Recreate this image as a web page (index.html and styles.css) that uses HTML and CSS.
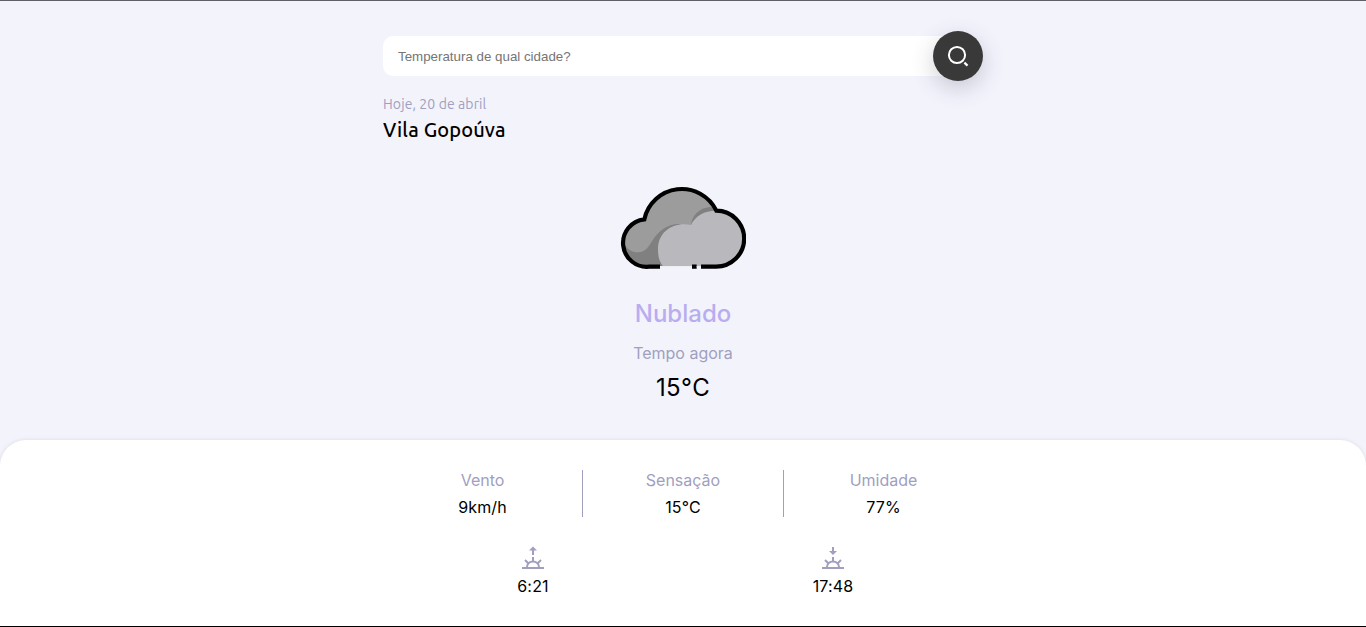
FILE: index.html
```html
<!DOCTYPE html>
<html lang="pt-BR">
<head>
<meta charset="utf-8">
<title>Previsão do tempo</title>
<link rel="stylesheet" href="styles.css">
</head>
<body>
<main class="top">
  <form class="search">
    <input class="search-input" type="text" placeholder="Temperatura de qual cidade?">
    <button class="search-button" type="button" aria-label="Buscar">
      <svg width="24" height="24" viewBox="0 0 24 24" fill="none" stroke="#fff" stroke-width="2"><circle cx="11" cy="11" r="8.1"/><path d="M18.4 18.6L21.5 21.6" stroke-width="2.2"/></svg>
    </button>
  </form>
  <p class="date">Hoje, 20 de abril</p>
  <h1 class="city">Vila Gopoúva</h1>
  <section class="now">
    <svg class="cloud" width="126" height="84" viewBox="30 33 378 252">
      <path fill="#9c9c9d" d="M118 275A71 71 0 0 1 103 133A115 115 0 0 1 319 107A84 84 0 0 1 318 275Z"/>
      <path fill="#808081" d="M42 204C51 223 65 232 84 232C108 231 116 213 127 197C145 169 172 147 207 147L245 160V275H110C70 275 39 242 42 204Z"/>
      <path fill="#808081" d="M243 150C246 117 274 95 309 96L325 115L260 150Z"/>
      <path fill="#b9b8bc" d="M160 275C146 258 144 240 144 222C144 169 192 139 243 150C256 122 283 107 318 107A84 84 0 0 1 318 275Z"/>
      <path fill="none" stroke="#000" stroke-width="12.5" d="M150 275H118A71 71 0 0 1 103 133A115 115 0 0 1 319 107A84 84 0 0 1 318 275H273M260 275H246"/>
      <path stroke="#eeedf2" stroke-width="4" d="M150 275H246M260 275H273"/>
    </svg>
    <h2 class="condition">Nublado</h2>
    <p class="label">Tempo agora</p>
    <p class="temperature">15°C</p>
  </section>
</main>
<footer class="details">
  <div class="stats">
    <div class="stat"><p class="label">Vento</p><p class="value">9km/h</p></div>
    <div class="stat divided"><p class="label">Sensação</p><p class="value">15°C</p></div>
    <div class="stat"><p class="label">Umidade</p><p class="value">77%</p></div>
  </div>
  <div class="sun-times">
    <div class="sun">
      <svg width="24" height="24" viewBox="0 0 24 24" fill="none" stroke="#a09fbf" stroke-width="2"><path d="M1 22H23M6 21a6 5.5 0 0 1 12 0M12 16v-5M7.5 17.5L4 14M16.5 17.5L20 14M12 9V3"/><path d="M8 4.5L12 .5L16 4.5Z" fill="#a09fbf" stroke="none"/></svg>
      <p class="value">6:21</p>
    </div>
    <div class="sun">
      <svg width="24" height="24" viewBox="0 0 24 24" fill="none" stroke="#a09fbf" stroke-width="2"><path d="M1 22H23M6 21a6 5.5 0 0 1 12 0M12 16v-5M7.5 17.5L4 14M16.5 17.5L20 14M12 1V6"/><path d="M8 5L12 9L16 5Z" fill="#a09fbf" stroke="none"/></svg>
      <p class="value">17:48</p>
    </div>
  </div>
</footer>
</body>
</html>
```
FILE: styles.css
```css
* { box-sizing: border-box; margin: 0; padding: 0; }
body {
  height: 627px;
  display: flex;
  flex-direction: column;
  overflow: hidden;
  background: #f3f3fc;
  border-top: 1px solid #5f5f65;
  border-bottom: 1px solid #000;
  font-family: Inter, sans-serif;
  font-size: 16px;
  color: #000;
}
.top { width: 600px; height: 439px; margin: 0 auto; padding-top: 30px; }
.search { display: flex; align-items: center; height: 50px; }
.search-input {
  width: 575px;
  height: 40px;
  padding: 0 15px;
  border: 0;
  border-radius: 10px;
  background: #fff;
  font: 13.333px "Liberation Sans", Arial, sans-serif;
}
.search-input::placeholder { color: #757575; }
.search-button {
  display: flex;
  align-items: center;
  justify-content: center;
  width: 50px;
  height: 50px;
  margin-left: -25px;
  border: 0;
  border-radius: 50%;
  background: #393939;
  box-shadow: 0 7px 22px rgba(57, 57, 80, .23);
}
.date {
  margin-top: 13px;
  font: 14px/20px Ubuntu, "Noto Sans", sans-serif;
  letter-spacing: .1px;
  color: #a09fbf;
}
.city {
  margin-top: 4px;
  font: 500 20px/24px Ubuntu, "Noto Sans", sans-serif;
  letter-spacing: .13px;
}
.now { display: flex; flex-direction: column; align-items: center; padding-top: 44px; }
.cloud { display: block; margin-right: 1px; }
.condition { margin-top: 29px; font-size: 24px; line-height: 30px; font-weight: 500; color: #b9adf0; }
.label { line-height: 20px; color: #a09fbf; }
.now .label { margin-top: 14px; }
.temperature { margin-top: 10px; font-size: 24px; line-height: 30px; letter-spacing: .4px; }
.details {
  flex: 1;
  padding-top: 30px;
  border-radius: 26px 26px 0 0;
  background: #fff;
  box-shadow: 0 0 4px rgba(0, 0, 0, .1);
}
.stats { display: flex; width: 600px; margin: 0 auto; text-align: center; }
.stat { flex: 1; height: 47px; }
.divided { flex: 0 0 202px; border: solid #a09fbf; border-width: 0 1px; }
.value { line-height: 20px; letter-spacing: .15px; }
.stat .value { margin-top: 7px; }
.sun-times { display: flex; width: 600px; margin: 29px auto 0; }
.sun { flex: 1; display: flex; flex-direction: column; align-items: center; }
.sun .value { margin-top: 6px; }
```
